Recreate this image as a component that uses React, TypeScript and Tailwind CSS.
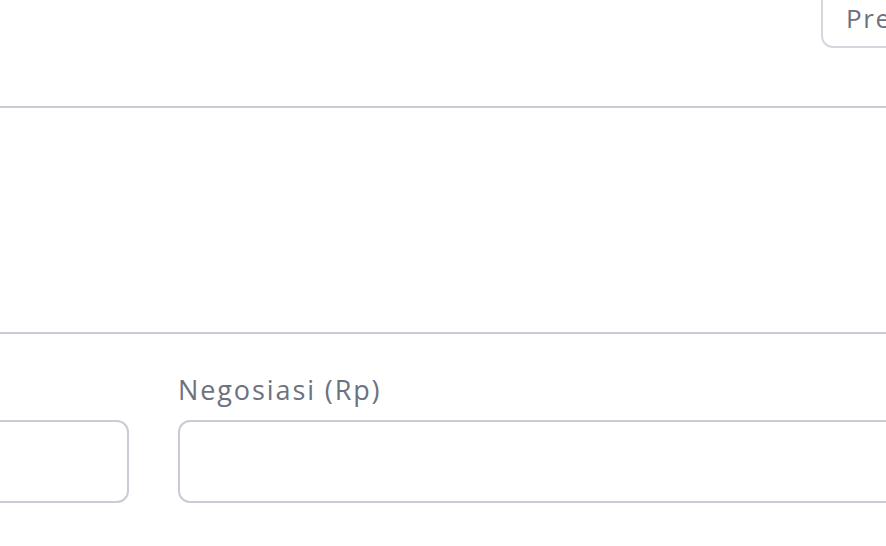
export default function App() {
  const font = { fontFamily: '"Open Sans", Lato, sans-serif' }
  return (
    <div className="w-[886px] h-[546px] overflow-hidden bg-white" style={font}>
      <div className="w-[1200px] ml-[-200px]">
        {/* Header with action button */}
        <div className="h-[106px] flex items-start justify-end pr-[29px]">
          <button className="-mt-[13px] w-[150px] h-[61px] border-2 border-[#d4d7de] rounded-[12px] text-left pl-[23px] text-[26px] leading-[32px] tracking-[1.6px] text-[#6b7280]">
            Preview
          </button>
        </div>

        <div className="border-t-2 border-[#c9ccd5]" />

        {/* Empty content area */}
        <div className="h-[224px]" />

        <div className="border-t-2 border-[#c9ccd5]" />

        {/* Form row */}
        <div className="pt-[38px] flex gap-[49px]">
          <div className="w-[329px]">
            <label className="block text-[27px] leading-[36px] text-[#6b7280] mb-[12px] invisible">
              Harga (Rp)
            </label>
            <input className="w-full h-[83px] border-2 border-[#c9ccd5] rounded-[12px] outline-none" />
          </div>
          <div className="flex-1">
            <label className="block text-[27px] leading-[36px] text-[#6b7280] mb-[12px] tracking-[1.9px]">
              Negosiasi (Rp)
            </label>
            <input className="w-full h-[83px] border-2 border-[#c9ccd5] rounded-[12px] outline-none" />
          </div>
        </div>
      </div>
    </div>
  )
}
